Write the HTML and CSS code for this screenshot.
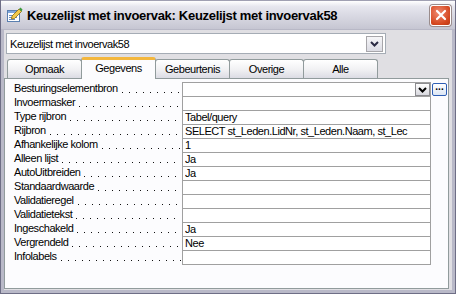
FILE: index.html
```html
<!DOCTYPE html>
<html>
<head>
<meta charset="utf-8">
<link rel="stylesheet" href="styles.css">
</head>
<body>
<div class="window">
  <div class="titlebar">
    <svg class="ticon" width="17" height="16" viewBox="0 0 17 16">
      <rect x="1.5" y="3.5" width="12" height="11" fill="#fff" stroke="#5a7fb0"/>
      <rect x="2" y="4" width="11" height="2" fill="#7ea6dc"/>
      <line x1="3" y1="8.5" x2="11" y2="8.5" stroke="#6a8fc4"/>
      <line x1="3" y1="10.5" x2="11" y2="10.5" stroke="#6a8fc4"/>
      <line x1="3" y1="12.5" x2="9" y2="12.5" stroke="#6a8fc4"/>
      <path d="M6 9 L13 2 L15.5 4.5 L8.5 11.5 L5.5 12 Z" fill="#f2c94c" stroke="#8a6a10" stroke-width="0.8"/>
      <path d="M13 2 L14.5 0.5 L16.5 2.5 L15.5 4.5 Z" fill="#3c9a3c"/>
    </svg>
    <span class="ttext">Keuzelijst met invoervak: Keuzelijst met invoervak58</span>
    <div class="close"><svg width="12" height="12" viewBox="0 0 12 12"><path d="M2 2 L10 10 M10 2 L2 10" stroke="#fff" stroke-width="2.2" stroke-linecap="round"/></svg></div>
  </div>
  <div class="body">
    <div class="combo">
      <span class="combotext">Keuzelijst met invoervak58</span>
      <span class="dropbtn"><svg width="9" height="6" viewBox="0 0 9 6"><path d="M1 1 L4.5 4.5 L8 1" fill="none" stroke="#2b2b44" stroke-width="2"/></svg></span>
    </div>
    <div class="tabs">
      <div class="tab">Opmaak</div>
      <div class="tab active">Gegevens</div>
      <div class="tab">Gebeurtenis</div>
      <div class="tab">Overige</div>
      <div class="tab">Alle</div>
    </div>
    <div class="panel">
      <div class="grid">
        <div class="row"><div class="label"><span>Besturingselementbron</span><i class="dots"></i></div><div class="value first"><span class="vtext"></span><span class="minidrop"><svg width="9" height="6" viewBox="0 0 9 6"><path d="M1 1 L4.5 4.5 L8 1" fill="none" stroke="#000" stroke-width="2"/></svg></span></div><span class="build">...</span></div>
        <div class="row"><div class="label"><span>Invoermasker</span><i class="dots"></i></div><div class="value"></div></div>
        <div class="row"><div class="label"><span>Type rijbron</span><i class="dots"></i></div><div class="value"><span class="vtext">Tabel/query</span></div></div>
        <div class="row"><div class="label"><span>Rijbron</span><i class="dots"></i></div><div class="value"><span class="vtext">SELECT st_Leden.LidNr, st_Leden.Naam, st_Lec</span></div></div>
        <div class="row"><div class="label"><span>Afhankelijke kolom</span><i class="dots"></i></div><div class="value"><span class="vtext">1</span></div></div>
        <div class="row"><div class="label"><span>Alleen lijst</span><i class="dots"></i></div><div class="value"><span class="vtext">Ja</span></div></div>
        <div class="row"><div class="label"><span>AutoUitbreiden</span><i class="dots"></i></div><div class="value"><span class="vtext">Ja</span></div></div>
        <div class="row"><div class="label"><span>Standaardwaarde</span><i class="dots"></i></div><div class="value"></div></div>
        <div class="row"><div class="label"><span>Validatieregel</span><i class="dots"></i></div><div class="value"></div></div>
        <div class="row"><div class="label"><span>Validatietekst</span><i class="dots"></i></div><div class="value"></div></div>
        <div class="row"><div class="label"><span>Ingeschakeld</span><i class="dots"></i></div><div class="value"><span class="vtext">Ja</span></div></div>
        <div class="row"><div class="label"><span>Vergrendeld</span><i class="dots"></i></div><div class="value"><span class="vtext">Nee</span></div></div>
        <div class="row"><div class="label"><span>Infolabels</span><i class="dots"></i></div><div class="value"></div></div>
      </div>
    </div>
  </div>
</div>
</body>
</html>
```

FILE: styles.css
```css
html, body {
  margin: 0;
  padding: 0;
  background: #fff;
}
.window {
  width: 456px;
  height: 294px;
  box-sizing: border-box;
  background: #E0DFE3;
  border: 1px solid #6E6E86;
  border-top: none;
  display: flex;
  flex-direction: column;
  font-family: "Liberation Sans", Arial, sans-serif;
}
.titlebar {
  height: 30px;
  flex: none;
  display: flex;
  align-items: center;
  background: linear-gradient(#FFFFFF 0%, #E6E6EE 20%, #D6D6E0 60%, #C6C6D2 100%);
  border-top: 1px solid #A0A0B2;
  border-bottom: 1px solid #B8B8C6;
  box-sizing: border-box;
  padding-left: 5px;
  padding-right: 4px;
}
.ticon {
  flex: none;
  margin-right: 4px;
}
.ttext {
  flex: 1;
  font-weight: bold;
  font-size: 13px;
  letter-spacing: -0.3px;
  color: #000;
  white-space: nowrap;
}
.close {
  width: 21px;
  height: 21px;
  box-sizing: border-box;
  border: 1px solid #fff;
  border-radius: 3px;
  background: radial-gradient(circle at 40% 35%, #F08A70, #D4461E 70%, #B83A18);
  display: flex;
  align-items: center;
  justify-content: center;
  box-shadow: 0 0 0 1px #9A8C8C;
}
.body {
  flex: 1;
  display: flex;
  flex-direction: column;
  border-left: 3px solid #B9B9C8;
  border-right: 3px solid #B9B9C8;
  border-bottom: 3px solid #B9B9C8;
  padding: 3px 0 1px 0;
  letter-spacing: -0.45px;
}
.combo {
  margin-left: 2px;
  width: 380px;
  height: 21px;
  box-sizing: border-box;
  background: #fff;
  border: 1px solid #A5ACB5;
  display: flex;
  align-items: center;
  padding-left: 3px;
  padding-right: 2px;
  font-size: 11px;
}
.combotext {
  flex: 1;
}
.dropbtn {
  width: 17px;
  height: 16px;
  box-sizing: border-box;
  border: 1px solid #A7A6AA;
  background: linear-gradient(#F6F6F8, #DCDCE4);
  display: flex;
  align-items: center;
  justify-content: center;
}
.tabs {
  display: flex;
  margin-top: 3px;
  margin-left: 3px;
  height: 21px;
  align-items: flex-end;
  position: relative;
  z-index: 1;
}
.tab {
  width: 75px;
  height: 19px;
  box-sizing: border-box;
  border: 1px solid #919B9C;
  border-bottom: none;
  border-radius: 3px 3px 0 0;
  background: linear-gradient(#FFFFFF, #F2F2F4 50%, #DCDCE4);
  font-size: 11px;
  text-align: center;
  line-height: 18px;
  margin-right: -1px;
}
.tab.active {
  height: 22px;
  width: 75px;
  margin-bottom: -1px;
  background: #FCFCFE;
  border-top: 3px solid #F3B73E;
  line-height: 16px;
  padding-bottom: 3px;
}
.panel {
  flex: 1;
  background: #FCFCFE;
  border: 1px solid #919B9C;
  box-sizing: border-box;
  margin-right: 3px;
  padding: 3px 0 0 8px;
}
.grid {
  display: flex;
  flex-direction: column;
}
.row {
  display: flex;
  height: 14px;
  font-size: 11px;
  line-height: 13px;
}
.label {
  width: 169px;
  display: flex;
  white-space: nowrap;
  color: #000;
  padding-left: 1px;
  box-sizing: border-box;
}
.dots {
  flex: 1;
  margin-left: 3px;
  margin-right: 1px;
  background-image: linear-gradient(90deg, transparent 1px, #111 1px, #111 2px, transparent 2px);
  background-size: 7px 1px;
  background-position: 0 10px;
  background-repeat: repeat-x;
}
.value {
  width: 249px;
  box-sizing: border-box;
  border-left: 1px solid #A0A0A0;
  border-right: 1px solid #A0A0A0;
  border-top: 1px solid #A0A0A0;
  background: #fff;
  padding-left: 2px;
  display: flex;
  min-width: 0;
}
.row:last-child .value {
  border-bottom: 1px solid #A0A0A0;
  height: 15px;
}
.vtext {
  flex: 1;
  min-width: 0;
  margin-right: 16px;
  white-space: nowrap;
  overflow: hidden;
}
.first .vtext {
  margin-right: 0;
}
.minidrop {
  width: 15px;
  height: 13px;
  box-sizing: border-box;
  border: 1px solid #8C8C90;
  background: linear-gradient(#FFFFFF, #D8D8DE);
  display: flex;
  align-items: center;
  justify-content: center;
}
.build {
  width: 15px;
  height: 13px;
  box-sizing: border-box;
  border: 1px solid #2E5EB4;
  border-radius: 2px;
  background: linear-gradient(#FFFFFF, #DCE6F4);
  font-size: 10px;
  font-weight: bold;
  letter-spacing: 0;
  line-height: 6px;
  text-align: center;
  margin-left: 1px;
  margin-top: 1px;
  color: #000;
}
```
